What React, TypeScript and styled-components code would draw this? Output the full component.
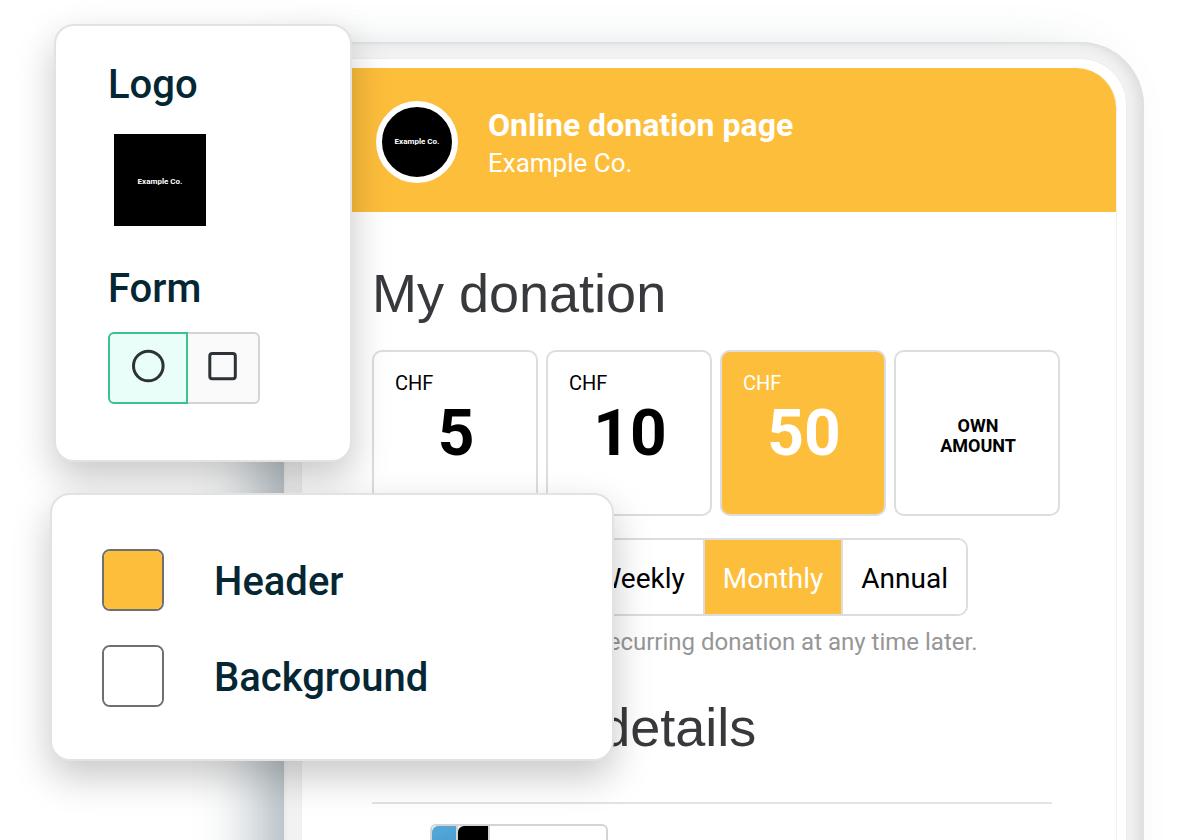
import React, { useState } from "react";
import styled, { createGlobalStyle } from "styled-components";

const accentDefault = "#fdbe3b";
const line = "#dddddd";

const GlobalStyle = createGlobalStyle`
  * { box-sizing: border-box; }
  body {
    margin: 0;
    background: #fff;
    font-family: Roboto, "Liberation Sans", sans-serif;
    color: #000;
  }
  button, input { font: inherit; color: inherit; margin: 0; }
`;

const Page = styled.div`
  position: relative;
  height: 100vh;
  overflow: hidden;
  padding: 42px 56px 0 284px;
`;

const Device = styled.div`
  padding: 17px 18px 0;
  min-height: 120vh;
  border-radius: 64px;
  background: #f2f2f2;
  box-shadow:
    inset 0 2px 2px #e0e2e2,
    inset -6px 0 12px #dcdcdc,
    -36px 18px 60px -10px rgba(75, 100, 112, 0.45);
`;

const Glass = styled.div`
  min-height: 120vh;
  padding: 9px 9px 0;
  border-radius: 46px;
  background: #fff;
  box-shadow: 0 0 0 1px #eeeeee;
`;

const Screen = styled.main`
  min-height: 120vh;
  border-right: 1px solid #f0f0f0;
  border-radius: 0 40px 0 0;
`;

const Banner = styled.header<{ $color: string }>`
  display: flex;
  align-items: center;
  gap: 30px;
  height: 144px;
  padding: 4px 65px 0;
  border-radius: 40px 40px 0 0;
  background: ${(p) => p.$color};
  color: #fff;
`;

const BannerText = styled.div`
  padding-top: 4px;
`;

const Logo = styled.div<{ $round?: boolean }>`
  display: grid;
  place-items: center;
  flex: none;
  width: ${(p) => (p.$round ? 82 : 92)}px;
  height: ${(p) => (p.$round ? 82 : 92)}px;
  padding: ${(p) => (p.$round ? 0 : "4px 0 0")};
  border: ${(p) => (p.$round ? "6px solid #fff" : "0")};
  border-radius: ${(p) => (p.$round ? "50%" : "0")};
  background: #000;
  color: #fff;
  font-size: 8px;
  line-height: 12px;
  font-weight: 700;
`;

const BannerTitle = styled.h1`
  margin: 0;
  font-size: 32px;
  line-height: 38px;
  font-weight: 700;
`;

const BannerOrg = styled.p`
  margin: 0;
  font-size: 26px;
  line-height: 38px;
`;

const Content = styled.div`
  padding: 50px 56px 0 61px;
`;

const SectionTitle = styled.h2`
  margin: 0;
  font-family: "Liberation Sans", Arial, sans-serif;
  font-size: 54px;
  line-height: 62px;
  font-weight: 400;
  color: #37393c;
`;

const Amounts = styled.div`
  display: grid;
  grid-template-columns: repeat(4, minmax(0, 1fr));
  gap: 8px;
  margin: 26px 0 22px;
`;

const AmountCard = styled.button<{ $fill?: string }>`
  display: flex;
  flex-direction: column;
  align-items: center;
  aspect-ratio: 1;
  padding: 18px 19px 20px 21px;
  border: 2px solid ${line};
  border-radius: 10px;
  background: ${(p) => p.$fill || "#fff"};
  color: ${(p) => (p.$fill ? "#fff" : "#000")};
  cursor: pointer;
`;

const Currency = styled.span`
  align-self: flex-start;
  font-size: 20px;
  line-height: 26px;
`;

const Value = styled.span`
  font-size: 64px;
  line-height: 76px;
  font-weight: 700;
`;

const OwnAmount = styled.span`
  max-width: 80px;
  margin: auto;
  padding-top: 8px;
  font-size: 18px;
  line-height: 20px;
  font-weight: 700;
`;

const Intervals = styled.div`
  display: flex;
  height: 78px;
  margin-right: 92px;
  border: 2px solid ${line};
  border-radius: 10px;
  overflow: hidden;
`;

const Interval = styled.button<{ $fill?: string }>`
  padding: 4px 18px 0;
  border: 0;
  background: ${(p) => p.$fill || "#fff"};
  color: ${(p) => (p.$fill ? "#fff" : "#000")};
  font-size: 28px;
  line-height: 34px;
  cursor: pointer;
  & + & { border-left: 2px solid ${line}; }
  &:first-child { flex: 1; }
`;

const Hint = styled.p`
  margin: 10px 0 38px;
  font-size: 24px;
  line-height: 32px;
  color: #969696;
  white-space: nowrap;
`;

const Divider = styled.hr`
  height: 2px;
  margin: 44px 8px 20px 0;
  border: 0;
  background: #e3e3e3;
`;

const Methods = styled.div`
  display: flex;
  width: 178px;
  height: 60px;
  margin-left: 58px;
  border: 2px solid #d4d4d4;
  border-radius: 6px;
  overflow: hidden;
`;

const MethodSwatch = styled.span<{ $width: number; $color: string }>`
  width: ${(p) => p.$width}px;
  border-right: 2px solid #d4d4d4;
  border-radius: 6px 0 0 0;
  background: ${(p) => p.$color};
`;

const Panel = styled.section<{ $top: number; $left: number; $width: number }>`
  position: absolute;
  top: ${(p) => p.$top}px;
  left: ${(p) => p.$left}px;
  width: ${(p) => p.$width}px;
  border: 2px solid #e2e2e2;
  border-radius: 20px;
  background: #fff;
  box-shadow: 0 16px 38px rgba(0, 0, 0, 0.22);
  color: #042733;
`;

const BrandPanel = styled(Panel)`
  padding: 35px 52px 56px;
`;

const ColorPanel = styled(Panel)`
  display: grid;
  gap: 34px;
  padding: 54px 50px 52px;
`;

const PanelTitle = styled.h2`
  margin: 0;
  font-size: 40px;
  line-height: 48px;
  font-weight: 500;
`;

const LogoSlot = styled.div`
  padding: 25px 6px 39px;
`;

const Shapes = styled.div`
  display: flex;
  margin-top: 19px;
`;

const ShapeButton = styled.button<{ $active: boolean }>`
  display: grid;
  place-items: center;
  width: ${(p) => (p.$active ? 80 : 72)}px;
  height: 72px;
  padding: 0 0 4px;
  border: 2px solid ${(p) => (p.$active ? "#3cc191" : "#d4d4d4")};
  background: ${(p) => (p.$active ? "#e9fef8" : "#fafafa")};
  cursor: pointer;
  &:first-child { border-radius: 6px 0 0 6px; }
  &:last-child { border-radius: 0 6px 6px 0; border-left-width: 0; }
`;

const ColorRow = styled.label`
  display: flex;
  align-items: center;
  gap: 50px;
  font-size: 40px;
  line-height: 48px;
  font-weight: 500;
`;

const ColorName = styled.span`
  padding-top: 4px;
`;

const ColorInput = styled.input`
  appearance: none;
  width: 62px;
  height: 62px;
  padding: 0;
  border: 2px solid #6f6f6f;
  border-radius: 8px;
  background: none;
  overflow: hidden;
  cursor: pointer;
  &::-webkit-color-swatch-wrapper { padding: 0; }
  &::-webkit-color-swatch { border: 0; border-radius: 0; }
`;

const amounts = [5, 10, 50];
const intervals = ["One-time", "Weekly", "Monthly", "Annual"];

export default function App() {
  const [accent, setAccent] = useState(accentDefault);
  const [background, setBackground] = useState("#ffffff");
  const [amount, setAmount] = useState(50);
  const [interval, setInterval] = useState("Monthly");
  const [round, setRound] = useState(true);

  return (
    <>
      <GlobalStyle />
      <Page>
        <Device>
          <Glass>
            <Screen style={{ background }}>
              <Banner $color={accent}>
                <Logo $round={round}>Example Co.</Logo>
                <BannerText>
                  <BannerTitle>Online donation page</BannerTitle>
                  <BannerOrg>Example Co.</BannerOrg>
                </BannerText>
              </Banner>
              <Content>
                <SectionTitle>My donation</SectionTitle>
                <Amounts>
                  {amounts.map((a) => (
                    <AmountCard
                      key={a}
                      type="button"
                      aria-pressed={a === amount}
                      $fill={a === amount ? accent : undefined}
                      onClick={() => setAmount(a)}
                    >
                      <Currency>CHF</Currency>
                      <Value>{a}</Value>
                    </AmountCard>
                  ))}
                  <AmountCard type="button">
                    <OwnAmount>OWN AMOUNT</OwnAmount>
                  </AmountCard>
                </Amounts>
                <Intervals role="group" aria-label="Interval">
                  {intervals.map((name) => (
                    <Interval
                      key={name}
                      type="button"
                      aria-pressed={name === interval}
                      $fill={name === interval ? accent : undefined}
                      onClick={() => setInterval(name)}
                    >
                      {name}
                    </Interval>
                  ))}
                </Intervals>
                <Hint>You can change your recurring donation at any time later.</Hint>
                <SectionTitle>Personal details</SectionTitle>
                <Divider />
                <Methods>
                  <MethodSwatch $width={26} $color="linear-gradient(160deg, #54aadb, #3f86bd)" />
                  <MethodSwatch $width={32} $color="#000" />
                </Methods>
              </Content>
            </Screen>
          </Glass>
        </Device>

        <BrandPanel $top={24} $left={54} $width={298}>
          <PanelTitle>Logo</PanelTitle>
          <LogoSlot>
            <Logo>Example Co.</Logo>
          </LogoSlot>
          <PanelTitle>Form</PanelTitle>
          <Shapes role="group" aria-label="Form">
            <ShapeButton
              type="button"
              aria-label="Round"
              aria-pressed={round}
              $active={round}
              onClick={() => setRound(true)}
            >
              <svg width="34" height="34" viewBox="0 0 34 34" fill="none" stroke="#2c3236" strokeWidth="3">
                <circle cx="17.3" cy="17" r="14.8" />
              </svg>
            </ShapeButton>
            <ShapeButton
              type="button"
              aria-label="Square"
              aria-pressed={!round}
              $active={!round}
              onClick={() => setRound(false)}
            >
              <svg width="34" height="34" viewBox="0 0 34 34" fill="none" stroke="#2c3236" strokeWidth="3">
                <rect x="3.8" y="4.5" width="25.5" height="25.2" rx="2.5" />
              </svg>
            </ShapeButton>
          </Shapes>
        </BrandPanel>

        <ColorPanel $top={493} $left={50} $width={564}>
          <ColorRow>
            <ColorInput type="color" value={accent} onChange={(e) => setAccent(e.target.value)} />
            <ColorName>Header</ColorName>
          </ColorRow>
          <ColorRow>
            <ColorInput type="color" value={background} onChange={(e) => setBackground(e.target.value)} />
            <ColorName>Background</ColorName>
          </ColorRow>
        </ColorPanel>
      </Page>
    </>
  );
}
